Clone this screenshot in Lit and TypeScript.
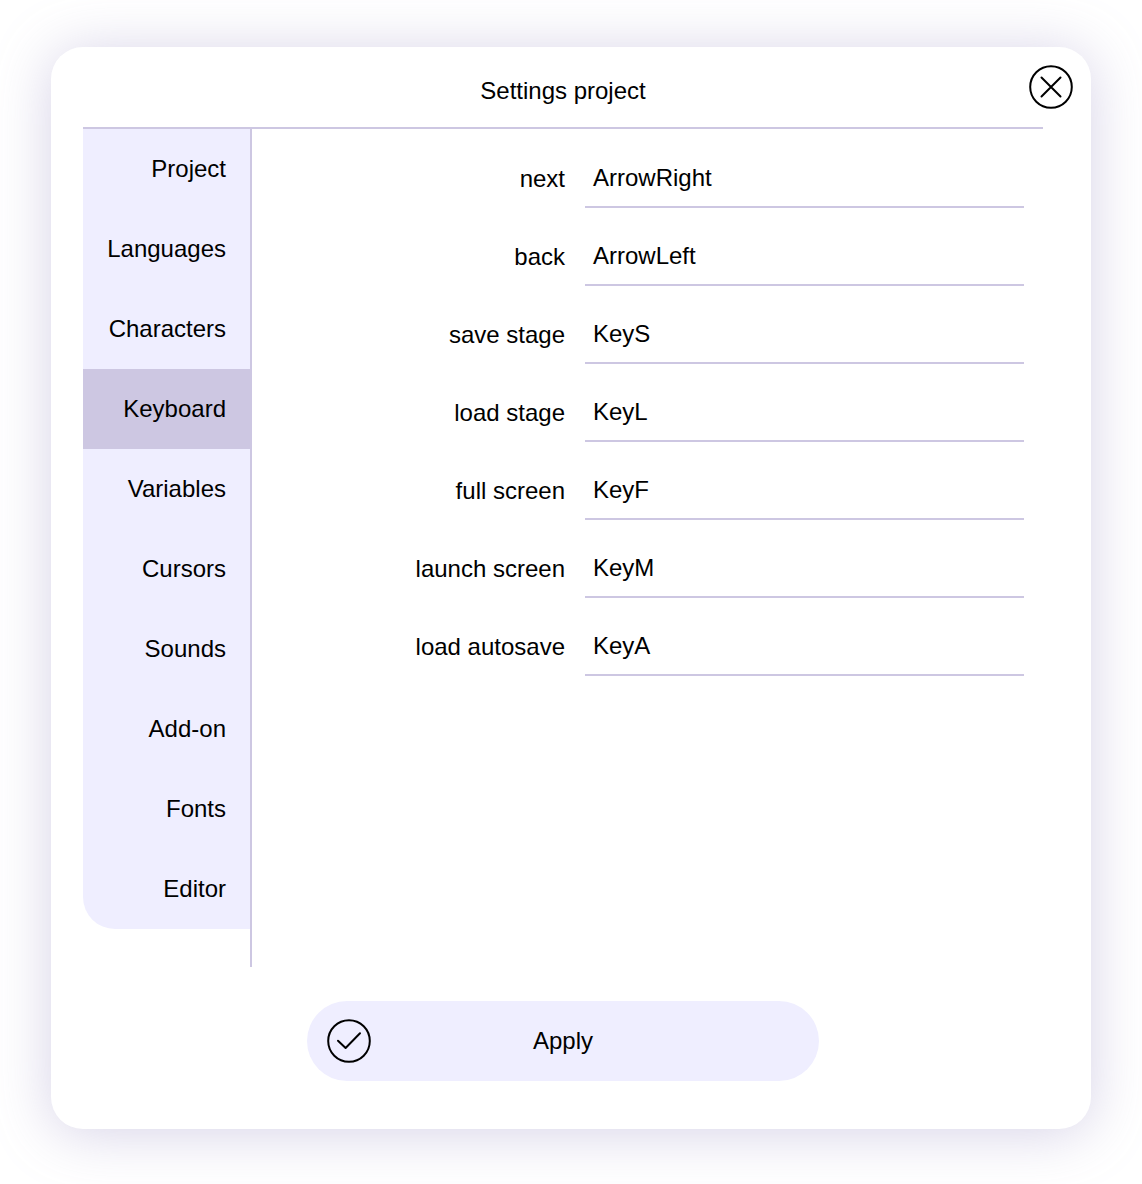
import { LitElement, html, css } from "lit";
import { customElement, state } from "lit/decorators.js";

const TABS = ["Project", "Languages", "Characters", "Keyboard", "Variables", "Cursors", "Sounds", "Add-on", "Fonts", "Editor"];
const KEYS = [
  ["next", "ArrowRight"],
  ["back", "ArrowLeft"],
  ["save stage", "KeyS"],
  ["load stage", "KeyL"],
  ["full screen", "KeyF"],
  ["launch screen", "KeyM"],
  ["load autosave", "KeyA"],
];

@customElement("app-root")
export class AppRoot extends LitElement {
  @state() private active = "Keyboard";

  static styles = css`
    :host {
      display: block;
      box-sizing: border-box;
      height: 1184px;
      padding: 47px 51px 55px;
      overflow: hidden;
      background: #fff;
      color: #000;
      font: 24px/28px "Liberation Sans", Arial, sans-serif;
    }
    * { box-sizing: border-box; }
    .dialog {
      position: relative;
      display: flex;
      flex-direction: column;
      height: 1082px;
      padding: 0 48px 0 32px;
      border-radius: 32px;
      background: #fff;
      box-shadow: 0 4px 56px rgba(204, 199, 225, 0.8);
    }
    .header {
      height: 82px;
      padding-top: 30px;
      border-bottom: 2px solid #cdc7e2;
      text-align: center;
    }
    .close {
      position: absolute;
      top: 18px;
      right: 18px;
      width: 44px;
      height: 44px;
      padding: 0;
      border: 0;
      background: none;
    }
    svg { display: block; width: 44px; height: 44px; fill: none; stroke: #000; stroke-width: 2; stroke-linecap: round; stroke-linejoin: round; }
    .body { display: flex; height: 838px; }
    .tabs { width: 169px; border-right: 2px solid #cdc7e2; }
    .list { overflow: hidden; border-bottom-left-radius: 32px; background: #efeeff; }
    .tab { height: 80px; padding: 26px 24px 0 0; text-align: right; }
    .tab.active { background: #cdc7e2; }
    .fields { flex: 1; padding: 20px 19px 0 0; }
    .row { display: flex; justify-content: flex-end; gap: 20px; height: 59px; margin-bottom: 19px; }
    .label { padding-top: 16px; }
    .value { width: 439px; padding: 15px 8px 0; border-bottom: 2px solid #cdc7e2; }
    .apply {
      display: flex;
      align-items: center;
      align-self: center;
      width: 512px;
      height: 80px;
      margin-top: 34px;
      padding: 0 20px;
      border: 0;
      border-radius: 40px;
      background: #efeeff;
      color: inherit;
      font: inherit;
    }
    .caption { flex: 1; padding-right: 44px; text-align: center; }
  `;

  render() {
    return html`
      <div class="dialog">
        <div class="header">Settings project</div>
        <button class="close" aria-label="Close">
          <svg viewBox="0 0 44 44"><circle cx="22" cy="22" r="20.8" /><path d="M12.5 12.5 31.5 31.5M31.5 12.5 12.5 31.5" /></svg>
        </button>
        <div class="body">
          <div class="tabs">
            <div class="list">
              ${TABS.map((t) => html`<div class="tab ${t === this.active ? "active" : ""}" @click=${() => (this.active = t)}>${t}</div>`)}
            </div>
          </div>
          <div class="fields">
            ${KEYS.map(([label, key]) => html`<div class="row"><div class="label">${label}</div><div class="value">${key}</div></div>`)}
          </div>
        </div>
        <button class="apply">
          <svg viewBox="0 0 44 44"><circle cx="22" cy="22" r="20.8" /><path d="M11 21.8 18.6 29 33 14.3" /></svg>
          <span class="caption">Apply</span>
        </button>
      </div>
    `;
  }
}
